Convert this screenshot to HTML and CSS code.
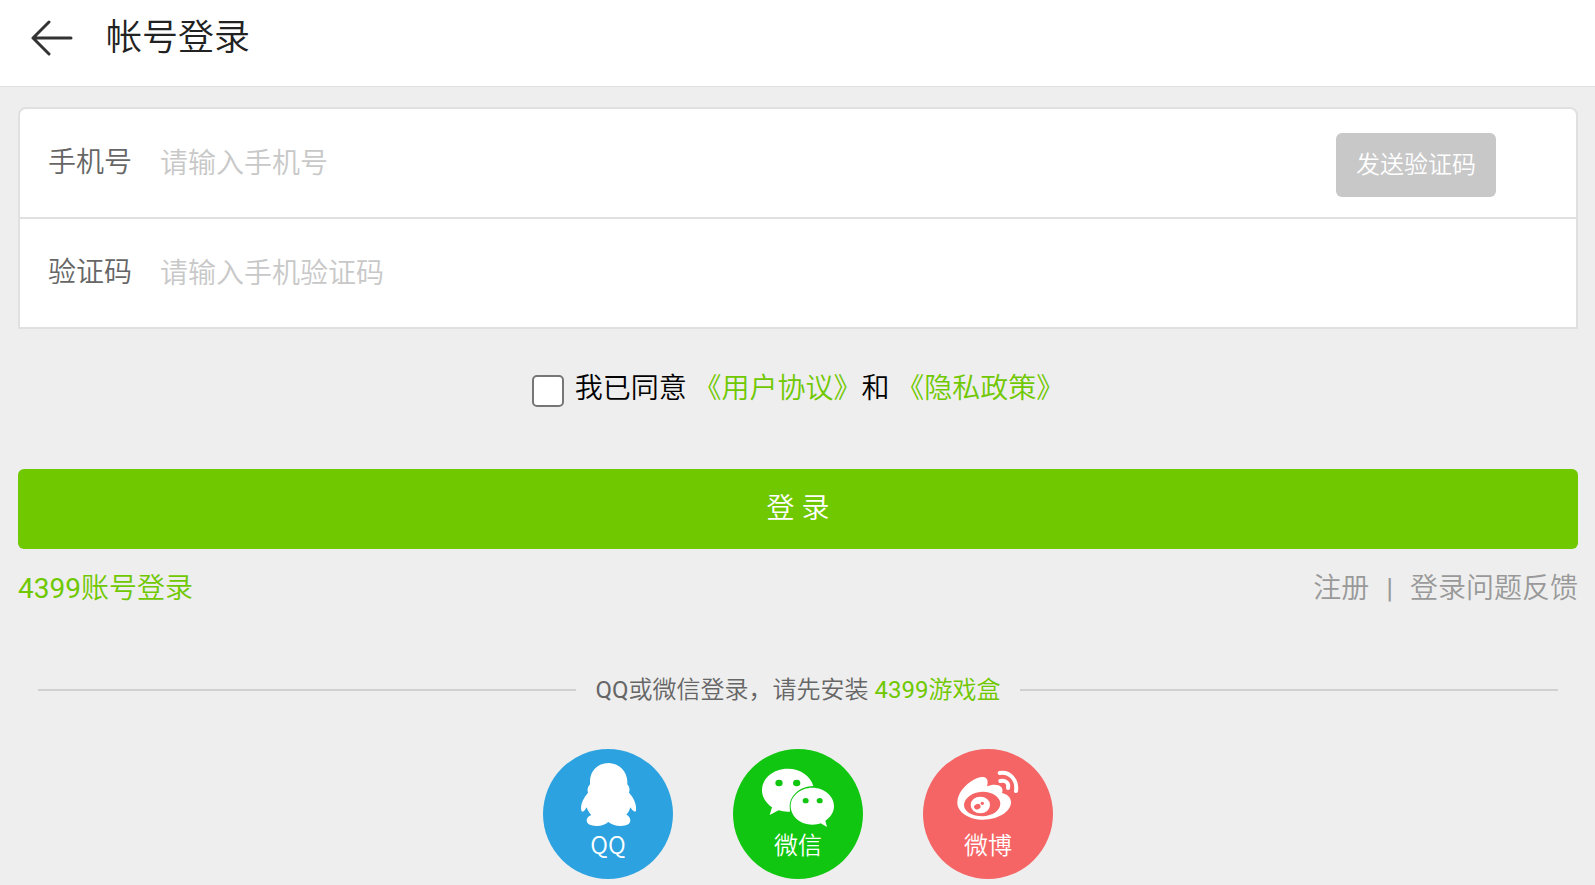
FILE: index.html
```html
<!DOCTYPE html>
<html lang="zh-CN">
<head>
<meta charset="utf-8">
<meta name="viewport" content="width=device-width, initial-scale=1">
<title>帐号登录</title>
<link rel="stylesheet" href="styles.css">
</head>
<body>
<header class="header">
  <a class="back" href="#" aria-label="返回">
    <svg class="back-icon" viewBox="0 0 42 36" aria-hidden="true"><path d="M18 2 2 18 18 34M2 18H40"/></svg>
  </a>
  <h1 class="title">帐号登录</h1>
</header>
<main class="main">
  <form class="form">
    <div class="fields">
      <div class="field">
        <label class="field-label" for="phone">手机号</label>
        <input class="field-input" id="phone" type="tel" placeholder="请输入手机号">
        <button class="send" type="button">发送验证码</button>
      </div>
      <div class="field">
        <label class="field-label" for="code">验证码</label>
        <input class="field-input" id="code" type="text" placeholder="请输入手机验证码">
      </div>
    </div>
    <div class="agree">
      <input class="agree-box" id="agree" type="checkbox">
      <span class="agree-text"><label for="agree">我已同意</label> <a class="green" href="#">《用户协议》</a>和 <a class="green" href="#">《隐私政策》</a></span>
    </div>
    <button class="submit" type="submit">登 录</button>
  </form>
  <nav class="links">
    <a class="green" href="#"><span class="latin">4399</span>账号登录</a>
    <span class="links-right"><a class="muted" href="#">注册</a><span class="latin">|</span><a class="muted" href="#">登录问题反馈</a></span>
  </nav>
  <section class="other">
    <p class="divider"><span><span class="latin">QQ</span>或微信登录，请先安装 <a class="green" href="#"><span class="latin">4399</span>游戏盒</a></span></p>
    <div class="socials">
      <a class="social qq" href="#">
        <svg class="social-icon" viewBox="99 57 270 210" aria-hidden="true">
          <path fill="#fff" d="M235 69C202 69 180 94 180 124L180 133C173 141 171 149 174 158C160 174 153 190 153 203C153 211 155 215 158 215C163 214 167 207 170 202C173 211 177 218 184 225C175 228 170 234 170 241C170 252 182 258 199 258C216 258 228 253 235 246C243 253 255 258 273 258C290 258 301 252 301 241C301 234 297 228 289 224C295 218 299 210 301 202C305 208 309 214 315 215C318 214 319 210 318 203C318 190 311 173 297 158C300 149 299 141 292 133L292 124C291 94 268 69 235 69Z"/>
        </svg>
        <span class="social-label">QQ</span>
      </a>
      <a class="social wechat" href="#">
        <svg class="social-icon" viewBox="99 57 270 210" aria-hidden="true">
          <path fill="#fff" d="M203 86C160 86 126 115 126 151C126 171 138 190 156 202L149 225L176 211C186 214 196 216 210 215L209 198C211 165 240 139 280 138C272 108 241 86 203 86Z"/>
          <path fill="#fff" d="M277 143C241 143 212 168 212 198C212 229 241 254 277 254C287 254 294 253 302 250L321 261L316 242C333 231 342 215 342 198C342 168 313 143 277 143Z"/>
          <g fill="#10c610"><ellipse cx="177" cy="129" rx="11" ry="10"/><ellipse cx="230" cy="129" rx="11" ry="10"/><ellipse cx="257" cy="182" rx="9" ry="8"/><ellipse cx="299" cy="182" rx="9" ry="8"/></g>
        </svg>
        <span class="social-label">微信</span>
      </a>
      <a class="social weibo" href="#">
        <svg class="social-icon" viewBox="99 57 270 210" aria-hidden="true">
          <path fill="#fff" fill-rule="evenodd" d="M219 111C198 110 165 133 151 157C145 168 142 178 142 188C142 216 176 239 220 239C264 239 303 215 303 187C303 174 295 164 276 159C282 144 271 134 253 134C246 134 239 136 231 139C236 123 232 112 219 111ZM216 155C246 154 270 170 271 190C271 212 248 228 217 229C187 229 162 215 162 195C163 174 187 156 216 155Z"/>
          <ellipse cx="211" cy="195" rx="29" ry="25" fill="#fff"/>
          <g fill="#f56565"><ellipse cx="202" cy="200" rx="10" ry="8" transform="rotate(-20 202 200)"/><circle cx="217" cy="190" r="5"/></g>
          <g fill="none" stroke="#fff" stroke-width="12" stroke-linecap="round"><path d="M269 99C300 94 323 120 318 153"/><path d="M271 123C286 119 298 129 294 144"/></g>
        </svg>
        <span class="social-label">微博</span>
      </a>
    </div>
  </section>
</main>
</body>
</html>
```
FILE: styles.css
```css
* { box-sizing: border-box; }
body {
  margin: 0;
  background: #eee;
  color: #000;
  font: 350 28px/40px Roboto, "Noto Sans CJK SC", sans-serif;
}
a { text-decoration: none; }
input, button { font: inherit; border: 0; margin: 0; padding: 0; }
.green { color: #70c800; }
.muted { color: #999; }
.latin { font-weight: 400; }
.header {
  display: flex;
  align-items: center;
  padding: 11px 31px 21px;
  background: #fff;
  border-bottom: 1px solid #e0e0e0;
}
.back { display: flex; }
.back-icon {
  width: 42px;
  height: 36px;
  fill: none;
  stroke: #333;
  stroke-width: 3;
  stroke-linecap: round;
  stroke-linejoin: round;
}
.title {
  margin: 0 0 0 33px;
  color: #222;
  font-size: 36px;
  font-weight: 350;
  line-height: 54px;
}
.main { padding: 20px 17px 6px 18px; }
.fields {
  background: #fff;
  border: 2px solid #e0e0e0;
  border-radius: 8px 8px 0 0;
}
.field {
  display: flex;
  align-items: center;
  min-height: 108px;
  padding: 0 80px 0 28px;
}
.field + .field {
  min-height: 110px;
  border-top: 2px solid #e0e0e0;
}
.field-label { margin-right: 28px; color: #666; }
.field-input {
  flex: 1;
  min-width: 0;
  height: 60px;
  background: transparent;
  outline: 0;
}
.field-input::placeholder { color: #c8c8c8; opacity: 1; }
.send {
  width: 160px;
  height: 64px;
  margin-top: 4px;
  border-radius: 6px;
  background: #c8c8c8;
  color: #fff;
  font-size: 24px;
}
.agree {
  display: flex;
  justify-content: center;
  align-items: center;
  gap: 11px;
  padding: 40px 0;
}
.agree-box {
  appearance: none;
  width: 32px;
  height: 32px;
  margin-top: 4px;
  border: 2px solid #767676;
  border-radius: 5px;
  background: #fff;
}
.agree-box:checked { background: #70c800; }
.submit {
  width: 100%;
  height: 80px;
  margin-top: 20px;
  border-radius: 6px;
  background: #70c800;
  color: #fff;
}
.links {
  display: flex;
  justify-content: space-between;
  padding-top: 20px;
}
.links-right { display: flex; gap: 17px; color: #999; }
.other { padding: 61px 20px 0; }
.divider {
  display: flex;
  align-items: center;
  gap: 20px;
  margin: 0;
  color: #666;
  font-size: 24px;
}
.divider::before, .divider::after {
  content: "";
  flex: 1;
  height: 2px;
  background: #d0d0d0;
}
.socials {
  display: flex;
  justify-content: center;
  gap: 60px;
  padding-top: 39px;
}
.social {
  display: flex;
  flex-direction: column;
  align-items: center;
  width: 130px;
  height: 130px;
  padding-top: 10px;
  border-radius: 50%;
  color: #fff;
}
.social-icon { width: 90px; height: 70px; }
.social-label {
  font-family: "Noto Sans CJK SC", sans-serif;
  font-size: 24px;
  line-height: 30px;
}
.qq { background: #2ca3e0; }
.wechat { background: #10c610; }
.weibo { background: #f56565; }
```
